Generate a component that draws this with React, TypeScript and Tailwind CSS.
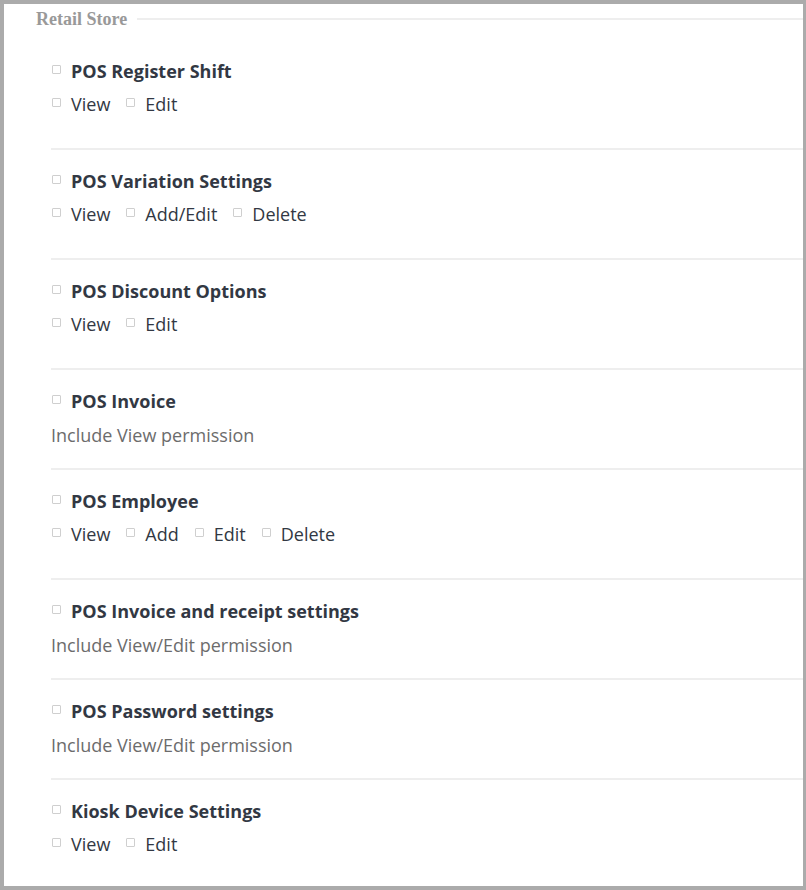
import React from "react";

type Section = { title: string; options?: string[]; desc?: string };

const sections: Section[] = [
  { title: "POS Register Shift", options: ["View", "Edit"] },
  { title: "POS Variation Settings", options: ["View", "Add/Edit", "Delete"] },
  { title: "POS Discount Options", options: ["View", "Edit"] },
  { title: "POS Invoice", desc: "Include View permission" },
  { title: "POS Employee", options: ["View", "Add", "Edit", "Delete"] },
  { title: "POS Invoice and receipt settings", desc: "Include View/Edit permission" },
  { title: "POS Password settings", desc: "Include View/Edit permission" },
  { title: "Kiosk Device Settings", options: ["View", "Edit"] },
];

function Box() {
  return (
    <span className="inline-block w-[9px] h-[9px] border border-[#cfcfcf] bg-white rounded-[1px] mr-[10px] -translate-y-[2px] shrink-0" />
  );
}

export default function App() {
  return (
    <div
      className="w-[806px] h-[890px] bg-white border-t-4 border-l-4 border-b-4 border-r-[3px] border-[#ababab] overflow-hidden"
      style={{ fontFamily: '"Open Sans", sans-serif' }}
    >
      <div className="flex items-center h-[30px]">
        <span
          className="ml-[32px] text-[18px] font-bold text-[#999999] leading-5"
          style={{ fontFamily: '"Liberation Serif", serif' }}
        >
          Retail Store
        </span>
        <div className="flex-1 ml-[10px] h-[2px] bg-[#eeeeee]" />
      </div>
      <div className="ml-[47px] pt-[6px]">
        {sections.map((s, i) => (
          <div
            key={i}
            className={`pt-[19px] ${s.options ? "pb-[32px]" : "pb-[21px]"} ${
              i < sections.length - 1 ? "border-b-2 border-[#eeeeee]" : ""
            }`}
          >
            <div className="flex items-center h-6 pl-px">
              <Box />
              <span className="text-[18px] font-bold text-[#323843] leading-6">{s.title}</span>
            </div>
            {s.options ? (
              <div className="flex items-center h-6 mt-[9px] pl-px gap-[16px]">
                {s.options.map((o) => (
                  <span key={o} className="flex items-center">
                    <Box />
                    <span className="text-[18px] text-[#323843] leading-6">{o}</span>
                  </span>
                ))}
              </div>
            ) : (
              <div className="mt-[10px] h-6 text-[18px] text-[#6c6c6c] leading-6">{s.desc}</div>
            )}
          </div>
        ))}
      </div>
    </div>
  );
}
